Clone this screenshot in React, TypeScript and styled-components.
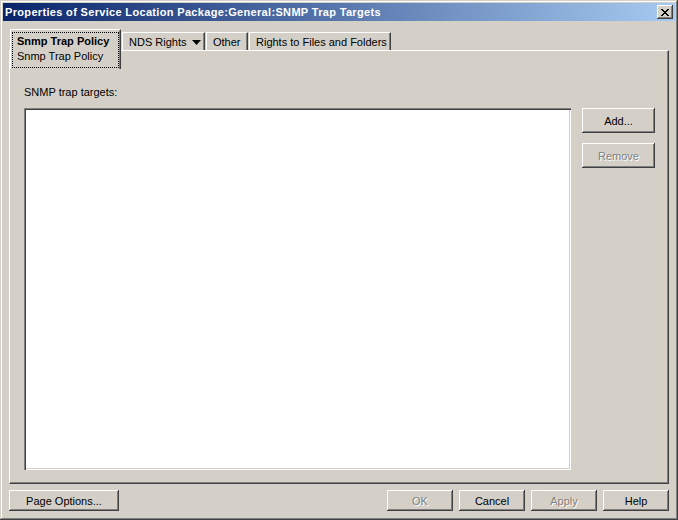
import styled, { createGlobalStyle } from "styled-components";

const GlobalStyle = createGlobalStyle`
  html, body {
    margin: 0;
    padding: 0;
    background: #d4d0c8;
  }
  body {
    font-family: "Liberation Sans", Arial, sans-serif;
    font-size: 11px;
  }
`;

interface TabProps {
  $width: number;
}

export default function App() {
  return (
    <>
      <GlobalStyle />
      <Window>
        <TitleBar>
          <TitleText>Properties of Service Location Package:General:SNMP Trap Targets</TitleText>
          <CloseButton aria-label="Close">
            <svg width="8" height="7" viewBox="0 0 8 7" shapeRendering="crispEdges">
              <path
                d="M0 0h2v1h-2zM6 0h2v1h-2zM1 1h2v1h-2zM5 1h2v1h-2zM2 2h4v1h-4zM3 3h2v1h-2zM2 4h4v1h-4zM1 5h2v1h-2zM5 5h2v1h-2zM0 6h2v1h-2zM6 6h2v1h-2z"
                fill="#000"
              />
            </svg>
          </CloseButton>
        </TitleBar>

        <Body>
          <TabStrip>
            <ActiveTab $width={111}>
              <FocusRing>
                <TabTitle>Snmp Trap Policy</TabTitle>
                <TabSubtitle>Snmp Trap Policy</TabSubtitle>
              </FocusRing>
            </ActiveTab>
            <Tab $width={83}>
              NDS Rights
              <svg width="9" height="5" viewBox="0 0 9 5">
                <polygon points="0,0 9,0 4.5,5" fill="#000" />
              </svg>
            </Tab>
            <Tab $width={42}>Other</Tab>
            <Tab $width={142}>Rights to Files and Folders</Tab>
          </TabStrip>

          <Panel>
            <FieldLabel>SNMP trap targets:</FieldLabel>
            <ListRow>
              <TargetList />
              <SideButtons>
                <Button $h={25}>Add...</Button>
                <Button $h={25} disabled>
                  Remove
                </Button>
              </SideButtons>
            </ListRow>
          </Panel>

          <ButtonBar>
            <Button $h={21} $w={110}>
              Page Options...
            </Button>
            <DialogButtons>
              <Button $h={21} $w={66} disabled>
                OK
              </Button>
              <Button $h={21} $w={66}>
                Cancel
              </Button>
              <Button $h={21} $w={66} disabled>
                Apply
              </Button>
              <Button $h={21} $w={66}>
                Help
              </Button>
            </DialogButtons>
          </ButtonBar>
        </Body>
      </Window>
    </>
  );
}

const Window = styled.div`
  width: 678px;
  height: 520px;
  box-sizing: border-box;
  padding: 3px;
  display: flex;
  flex-direction: column;
  background: #d4d0c8;
  box-shadow: inset -1px -1px 0 #404040, inset 1px 1px 0 #d4d0c8,
    inset -2px -2px 0 #808080, inset 2px 2px 0 #ffffff;
`;

const TitleBar = styled.div`
  height: 18px;
  display: flex;
  align-items: center;
  justify-content: space-between;
  padding: 0 2px 0 2px;
  background: linear-gradient(to right, #0a246a, #a6caf0);
`;

const TitleText = styled.span`
  color: #ffffff;
  font-family: "Liberation Sans", Arial, sans-serif;
  font-weight: bold;
  font-size: 11px;
  letter-spacing: 0.33px;
  white-space: nowrap;
`;

const CloseButton = styled.button`
  width: 16px;
  height: 14px;
  padding: 0;
  border: none;
  display: flex;
  align-items: center;
  justify-content: center;
  background: #d4d0c8;
  box-shadow: inset -1px -1px 0 #404040, inset 1px 1px 0 #ffffff,
    inset -2px -2px 0 #808080;
`;

const Body = styled.div`
  flex: 1;
  display: flex;
  flex-direction: column;
  padding: 8px 6px 6px 6px;
`;

const TabStrip = styled.div`
  height: 21px;
  display: flex;
  align-items: flex-end;
  gap: 1px;
  padding-left: 1px;
`;

const Tab = styled.div<TabProps>`
  width: ${(p) => p.$width}px;
  height: 18px;
  box-sizing: border-box;
  display: flex;
  align-items: center;
  gap: 6px;
  padding: 1px 0 0 6px;
  border-top: 1px solid #ffffff;
  border-left: 1px solid #ffffff;
  border-right: 1px solid #404040;
  box-shadow: inset -1px 0 0 #808080;
  color: #000;
  white-space: nowrap;
`;

const ActiveTab = styled.div<TabProps>`
  position: relative;
  z-index: 1;
  width: ${(p) => p.$width}px;
  height: 40px;
  margin-bottom: -19px;
  box-sizing: border-box;
  padding: 2px 1px 1px 1px;
  background: #d4d0c8;
  border-top: 1px solid #ffffff;
  border-left: 1px solid #ffffff;
  border-right: 1px solid #404040;
  box-shadow: inset -1px 0 0 #808080;
`;

const FocusRing = styled.div`
  height: 100%;
  box-sizing: border-box;
  border: 1px dotted #000;
  padding: 1px 0 0 4px;
  display: flex;
  flex-direction: column;
`;

const TabTitle = styled.span`
  font-weight: bold;
  line-height: 15px;
  white-space: nowrap;
`;

const TabSubtitle = styled.span`
  line-height: 15px;
  white-space: nowrap;
`;

const Panel = styled.div`
  flex: 1;
  display: flex;
  flex-direction: column;
  padding: 35px 13px 13px 14px;
  border-top: 1px solid #ffffff;
  border-left: 1px solid #ffffff;
  border-right: 1px solid #404040;
  border-bottom: 1px solid #404040;
  box-shadow: inset -1px -1px 0 #808080;
`;

const FieldLabel = styled.div`
  line-height: 13px;
  margin-bottom: 9px;
`;

const ListRow = styled.div`
  flex: 1;
  display: flex;
  gap: 11px;
`;

const TargetList = styled.div`
  flex: 1;
  background: #ffffff;
  box-shadow: inset 1px 1px 0 #808080, inset 2px 2px 0 #404040,
    inset -1px -1px 0 #ffffff, inset -2px -2px 0 #d4d0c8;
`;

const SideButtons = styled.div`
  width: 73px;
  display: flex;
  flex-direction: column;
  gap: 10px;
`;

const Button = styled.button<{ $h: number; $w?: number }>`
  height: ${(p) => p.$h}px;
  width: ${(p) => (p.$w ? `${p.$w}px` : "100%")};
  padding: 0;
  border: none;
  background: #d4d0c8;
  font-family: "Liberation Sans", Arial, sans-serif;
  font-size: 11px;
  color: #000;
  box-shadow: inset -1px -1px 0 #404040, inset 1px 1px 0 #ffffff,
    inset -2px -2px 0 #808080;

  &:disabled {
    color: #808080;
    text-shadow: 1px 1px 0 #ffffff;
  }
`;

const ButtonBar = styled.div`
  display: flex;
  justify-content: space-between;
  margin-top: 6px;
`;

const DialogButtons = styled.div`
  display: flex;
  gap: 6px;
`;
